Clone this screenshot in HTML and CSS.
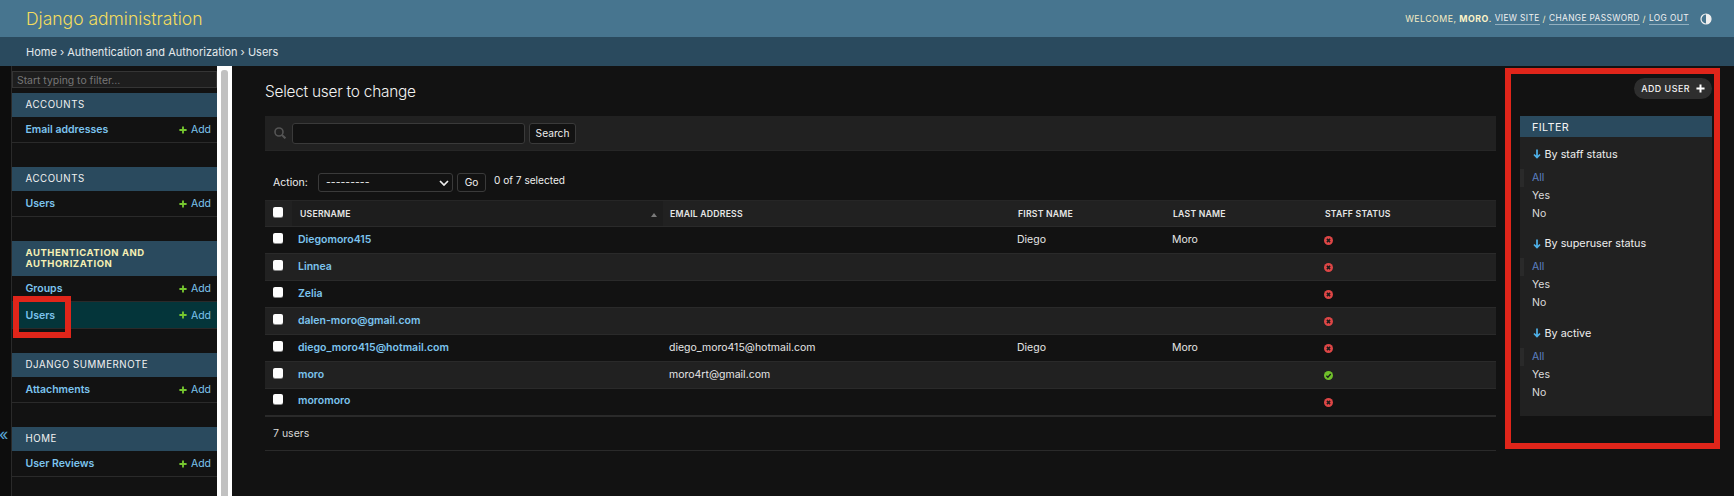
FILE: index.html
```html
<!DOCTYPE html>
<html lang="en">
<head>
<meta charset="utf-8">
<title>Select user to change | Django site admin</title>
<link rel="stylesheet" href="styles.css">
</head>
<body>
<svg class="defs" width="0" height="0" aria-hidden="true">
  <symbol id="no" viewBox="0 0 18 18"><circle cx="9" cy="9" r="9" fill="#dd4646"/><path d="M5.8 5.8l6.4 6.4M12.2 5.8l-6.4 6.4" stroke="#1a1a1a" stroke-width="3"/></symbol>
  <symbol id="yes" viewBox="0 0 18 18"><circle cx="9" cy="9" r="9" fill="#70bf2b"/><path d="M4.8 9.4l3 3 5.6-6.4" stroke="#1a1a1a" stroke-width="2.6" fill="none"/></symbol>
  <symbol id="plus" viewBox="0 0 10 10"><path d="M5 .5v9M.5 5h9" stroke="#76c72f" stroke-width="2.3"/></symbol>
  <symbol id="arrow" viewBox="0 0 8 10"><path d="M4 .5v8M1 5.5l3 3 3-3" stroke="#4fb2ea" stroke-width="1.7" fill="none"/></symbol>
</svg>

<header class="top">
  <div class="brand">Django administration</div>
  <div class="tools">
    <span class="welcome">WELCOME, <strong>MORO</strong>.</span>
    <a href="#">VIEW SITE</a><span>/</span><a href="#">CHANGE PASSWORD</a><span>/</span><a href="#">LOG OUT</a>
    <svg class="theme" viewBox="0 0 12 12" width="12" height="12"><circle cx="6" cy="6" r="5" fill="none" stroke="#f0f0f0" stroke-width="1.2"/><path d="M6 1a5 5 0 0 1 0 10z" fill="#f0f0f0"/></svg>
  </div>
</header>
<nav class="crumbs">Home › Authentication and Authorization › Users</nav>

<div class="main">
  <div class="toggle"><span>«</span></div>
  <aside class="side">
    <div class="side-inner">
      <input class="nav-filter" type="text" placeholder="Start typing to filter...">
      <section class="app">
        <h2 class="app-head">ACCOUNTS</h2>
        <div class="app-row"><a href="#">Email addresses</a><span class="add"><svg width="8" height="8"><use href="#plus"/></svg>Add</span></div>
      </section>
      <section class="app">
        <h2 class="app-head">ACCOUNTS</h2>
        <div class="app-row"><a href="#">Users</a><span class="add"><svg width="8" height="8"><use href="#plus"/></svg>Add</span></div>
      </section>
      <section class="app">
        <h2 class="app-head current">AUTHENTICATION AND AUTHORIZATION</h2>
        <div class="app-row"><a href="#">Groups</a><span class="add"><svg width="8" height="8"><use href="#plus"/></svg>Add</span></div>
        <div class="app-row selected"><a href="#">Users</a><span class="add"><svg width="8" height="8"><use href="#plus"/></svg>Add</span></div>
      </section>
      <section class="app">
        <h2 class="app-head">DJANGO SUMMERNOTE</h2>
        <div class="app-row"><a href="#">Attachments</a><span class="add"><svg width="8" height="8"><use href="#plus"/></svg>Add</span></div>
      </section>
      <section class="app">
        <h2 class="app-head">HOME</h2>
        <div class="app-row"><a href="#">User Reviews</a><span class="add"><svg width="8" height="8"><use href="#plus"/></svg>Add</span></div>
      </section>
    </div>
    <div class="scrollbar"><div class="thumb"></div></div>
  </aside>

  <main class="content">
    <h1 class="title">Select user to change</h1>
    <div class="columns">
      <div class="list">
        <form class="toolbar">
          <svg class="search-icon" viewBox="0 0 12 12" width="12" height="12"><circle cx="5" cy="5" r="4" fill="none" stroke="#555" stroke-width="1.6"/><path d="M8 8l3.4 3.4" stroke="#555" stroke-width="2"/></svg>
          <input class="search" type="text" aria-label="Search">
          <button class="btn search-btn" type="button">Search</button>
        </form>
        <div class="actions">
          <label class="action-label">Action:</label>
          <span class="select-wrap">
            <select class="action-select"><option>---------</option></select>
            <svg class="chev" viewBox="0 0 10 6" width="10" height="6"><path d="M1 1l4 4 4-4" stroke="#eee" stroke-width="1.7" fill="none"/></svg>
          </span>
          <button class="btn go" type="button">Go</button>
          <span class="counter">0 of 7 selected</span>
        </div>
        <table class="users">
          <colgroup><col class="c0"><col class="c1"><col class="c2"><col class="c3"><col class="c4"><col class="c5"></colgroup>
          <thead>
            <tr>
              <th class="chk"><input type="checkbox" class="cb"></th>
              <th class="sorted">USERNAME<i class="sort"></i></th>
              <th>EMAIL ADDRESS</th>
              <th>FIRST NAME</th>
              <th>LAST NAME</th>
              <th>STAFF STATUS</th>
            </tr>
          </thead>
          <tbody>
            <tr><td class="chk"><input type="checkbox" class="cb"></td><td><a href="#">Diegomoro415</a></td><td></td><td>Diego</td><td>Moro</td><td><svg class="st"><use href="#no"/></svg></td></tr>
            <tr><td class="chk"><input type="checkbox" class="cb"></td><td><a href="#">Linnea</a></td><td></td><td></td><td></td><td><svg class="st"><use href="#no"/></svg></td></tr>
            <tr><td class="chk"><input type="checkbox" class="cb"></td><td><a href="#">Zelia</a></td><td></td><td></td><td></td><td><svg class="st"><use href="#no"/></svg></td></tr>
            <tr><td class="chk"><input type="checkbox" class="cb"></td><td><a href="#">dalen-moro@gmail.com</a></td><td></td><td></td><td></td><td><svg class="st"><use href="#no"/></svg></td></tr>
            <tr><td class="chk"><input type="checkbox" class="cb"></td><td><a href="#">diego_moro415@hotmail.com</a></td><td>diego_moro415@hotmail.com</td><td>Diego</td><td>Moro</td><td><svg class="st"><use href="#no"/></svg></td></tr>
            <tr><td class="chk"><input type="checkbox" class="cb"></td><td><a href="#">moro</a></td><td>moro4rt@gmail.com</td><td></td><td></td><td><svg class="st"><use href="#yes"/></svg></td></tr>
            <tr><td class="chk"><input type="checkbox" class="cb"></td><td><a href="#">moromoro</a></td><td></td><td></td><td></td><td><svg class="st"><use href="#no"/></svg></td></tr>
          </tbody>
        </table>
        <p class="paginator">7 users</p>
      </div>
      <aside class="right">
        <a class="add-user" href="#">ADD USER<svg viewBox="0 0 10 10" width="9" height="9"><path d="M5 .5v9M.5 5h9" stroke="#fff" stroke-width="2.2"/></svg></a>
        <div class="filter">
          <h2 class="filter-head">FILTER</h2>
          <div class="filter-body">
            <div class="fgroup">
              <h3><svg width="8" height="10"><use href="#arrow"/></svg>By staff status</h3>
              <ul><li class="on">All</li><li>Yes</li><li>No</li></ul>
            </div>
            <div class="fgroup">
              <h3><svg width="8" height="10"><use href="#arrow"/></svg>By superuser status</h3>
              <ul><li class="on">All</li><li>Yes</li><li>No</li></ul>
            </div>
            <div class="fgroup">
              <h3><svg width="8" height="10"><use href="#arrow"/></svg>By active</h3>
              <ul><li class="on">All</li><li>Yes</li><li>No</li></ul>
            </div>
          </div>
        </div>
      </aside>
    </div>
  </main>
</div>
<div class="mark mark-users"></div>
<div class="mark mark-filter"></div>
</body>
</html>
```
FILE: styles.css
```css
* { box-sizing: border-box; }
html, body { margin: 0; height: 496px; overflow: hidden; }
body {
  background: #121212;
  color: #eeeeee;
  font-family: Inter, "Liberation Sans", sans-serif;
  font-size: 11px;
  position: relative;
}
.defs { position: absolute; }
a { text-decoration: none; color: inherit; }
h1, h2, h3, p, ul { margin: 0; padding: 0; font-weight: 400; }
ul { list-style: none; }

.top {
  height: 37px;
  background: #47758f;
  display: flex;
  align-items: center;
  justify-content: space-between;
  padding: 0 22px 0 26px;
}
.brand { color: #f5dd5d; font-size: 17.5px; font-weight: 300; }
.tools { display: flex; align-items: center; gap: 3px; font-size: 8.3px; letter-spacing: .4px; color: #f5ecc4; }
.welcome { font-size: 8.8px; letter-spacing: .45px; }
.tools strong { font-weight: 700; color: #fbf3c8; }
.tools a { color: #f2f2f2; border-bottom: 1px solid #93b0c0; line-height: 11px; }
.theme { margin-left: 8px; }

.crumbs {
  height: 29px;
  background: #2a4a5e;
  color: #e4e9ec;
  padding-left: 26px;
  display: flex;
  align-items: center;
  font-size: 11px;
}

.main { display: flex; height: 430px; }
.toggle {
  width: 12px;
  background: #0d0d0d;
  border-right: 1px solid #2a2a2a;
  position: relative;
  color: #5aa6d6;
  font-size: 16px;
}
.toggle span { position: absolute; left: -1px; top: 358px; }

.side { width: 220px; display: flex; }
.side-inner { width: 205px; padding-top: 5px; background: #121212; }
.nav-filter {
  display: block;
  width: 100%;
  height: 17px;
  margin-bottom: 5px;
  background: #1e1e1e;
  border: 1px solid #353535;
  padding: 1px 4px 0;
  font: 10.4px Inter, sans-serif;
  color: #eee;
}
.nav-filter::placeholder { color: #777; }
.app { margin-bottom: 24.5px; }
.app-head {
  background: #2a4a5e;
  color: #f2f2f2;
  font-size: 9.7px;
  letter-spacing: .55px;
  line-height: 11px;
  padding: 6.25px 13.5px;
}
.app-head.current { color: #f6f0b4; font-weight: 700; font-size: 9.5px; letter-spacing: .55px; }
.app-row {
  height: 26px;
  display: flex;
  align-items: center;
  justify-content: space-between;
  padding: 1px 6px 0 13.5px;
  border-bottom: 1px solid #2a2a2a;
  color: #7cc4ee;
}
.app-row > a { font-weight: 600; font-size: 10.5px; }
.app-row.selected { background: #04353a; height: 27px; }
.add { display: flex; align-items: center; gap: 4px; font-size: 10.5px; }

.scrollbar {
  width: 15px;
  background: #ffffff;
  padding: 4px 4px 0;
  display: flex;
}
.thumb { width: 7px; background: #c1c1c1; height: 100%; border-radius: 3px 3px 0 0; }

.content { flex: 1; padding: 0 22px 0 33px; min-width: 0; }
.title { font-size: 15.4px; letter-spacing: -.24px; font-weight: 300; color: #f2f2f2; height: 50px; line-height: 20px; padding-top: 16px; }
.columns { display: flex; gap: 24px; }
.list { width: 1231px; }

.toolbar {
  height: 35px;
  background: #212121;
  border-bottom: 1px solid #262626;
  display: flex;
  align-items: center;
  padding-left: 9px;
}
.search-icon { margin-right: 6px; }
.search {
  width: 233px;
  height: 21px;
  background: #121212;
  border: 1px solid #3a3a3a;
  border-radius: 3px;
  margin-right: 4px;
}
.btn {
  background: #121212;
  color: #eeeeee;
  border: 1px solid #3a3a3a;
  border-radius: 3px;
  font: 400 10.2px Inter, sans-serif;
  padding: 0;
  height: 20px;
}
.search-btn { width: 47px; height: 21px; }

.actions { display: flex; align-items: center; height: 49px; padding: 13px 0 0 8px; }
.action-label { width: 45px; font-size: 10.5px; }
.select-wrap { position: relative; display: block; height: 19px; margin-right: 4px; }
.action-select {
  appearance: none;
  display: block;
  width: 135px;
  height: 19px;
  background: #121212;
  color: #eee;
  border: 1px solid #3a3a3a;
  border-radius: 3px;
  padding-left: 7px;
  font: 10.5px Inter, sans-serif;
}
.chev { position: absolute; right: 4px; top: 7px; }
.go { width: 29px; height: 19px; }
.counter { margin-left: 8px; font-size: 10.1px; position: relative; top: -2px; }

.users { width: 100%; table-layout: fixed; border-collapse: collapse; }
.c0 { width: 27px; } .c1 { width: 371px; } .c2 { width: 348px; }
.c3 { width: 155px; } .c4 { width: 152px; } .c5 { width: 178px; }
.users th {
  height: 26px;
  background: #212121;
  border-top: 1px solid #262626;
  border-bottom: 1px solid #2a2a2a;
  font-size: 8.7px;
  font-weight: 600;
  letter-spacing: .2px;
  text-align: left;
  padding: 0 0 0 7px;
  color: #e6e6e6;
  position: relative;
}
.users th.sorted { background: #1d1d1d; padding-left: 8px; }
.users th.chk { padding: 0 0 1px 8px; }
.users td.chk { padding: 0 0 3px 8px; }
.sort {
  position: absolute;
  right: 6px;
  top: 12px;
  border: 3.5px solid transparent;
  border-top: 0;
  border-bottom: 4px solid #7a7a7a;
}
.users td {
  height: 27px;
  padding: 0 0 2px 6px;
  font-size: 10.5px;
  color: #e6e6e6;
  border-bottom: 1px solid #2a2a2a;
}
.users tbody tr:nth-child(even) td { background: #212121; }
.users tbody tr:last-child td { border-bottom: 2px solid #2a2a2a; }
.users td a { color: #7cc4ee; font-weight: 600; }
.cb {
  appearance: none;
  display: block;
  width: 10px;
  height: 10px;
  margin: -2px 0 0;
  background: #fdfdfd;
  border-radius: 2px;
  box-shadow: 0 1px 0 #8a8a8a;
}
.st { display: block; width: 9px; height: 9px; margin-top: 3px; }

.paginator {
  height: 34px;
  line-height: 34px;
  padding-left: 8px;
  border-bottom: 1px solid #2a2a2a;
  font-size: 10.5px;
  color: #d8d8d8;
}

.right { width: 192px; margin-top: -38px; }
.add-user {
  display: flex;
  align-items: center;
  justify-content: flex-end;
  gap: 6px;
  width: 78px;
  height: 21px;
  padding-right: 7px;
  margin: 0 0 17px auto;
  border-radius: 11px;
  background: #2e2e2e;
  color: #f4f4f4;
  font-size: 8.9px;
  font-weight: 500;
  letter-spacing: .5px;
}
.filter { height: 300px; background: #212121; }
.filter-head {
  height: 21px;
  line-height: 23px;
  background: #2a4a5e;
  color: #f4f4f4;
  font-size: 10.8px;
  font-weight: 400;
  letter-spacing: .4px;
  padding-left: 12px;
}
.filter-body { padding: 8px 0 0; }
.fgroup { height: 89.5px; }
.fgroup h3 {
  display: flex;
  align-items: center;
  gap: 3.5px;
  padding-left: 13px;
  height: 18px;
  font-size: 10.8px;
  color: #eee;
}
.fgroup ul { margin-top: 5.5px; }
.fgroup li {
  height: 18px;
  line-height: 18px;
  padding-left: 12px;
  font-size: 10.5px;
  color: #dcdcdc;
}
.fgroup li.on { color: #5b80c2; border-left: 4px solid #2a2a2a; padding-left: 8px; }

.mark { position: absolute; border: 6px solid #e0251a; pointer-events: none; }
.mark-users { left: 13px; top: 296px; width: 58px; height: 42px; }
.mark-filter { left: 1505px; top: 68px; width: 215px; height: 381px; }
```
